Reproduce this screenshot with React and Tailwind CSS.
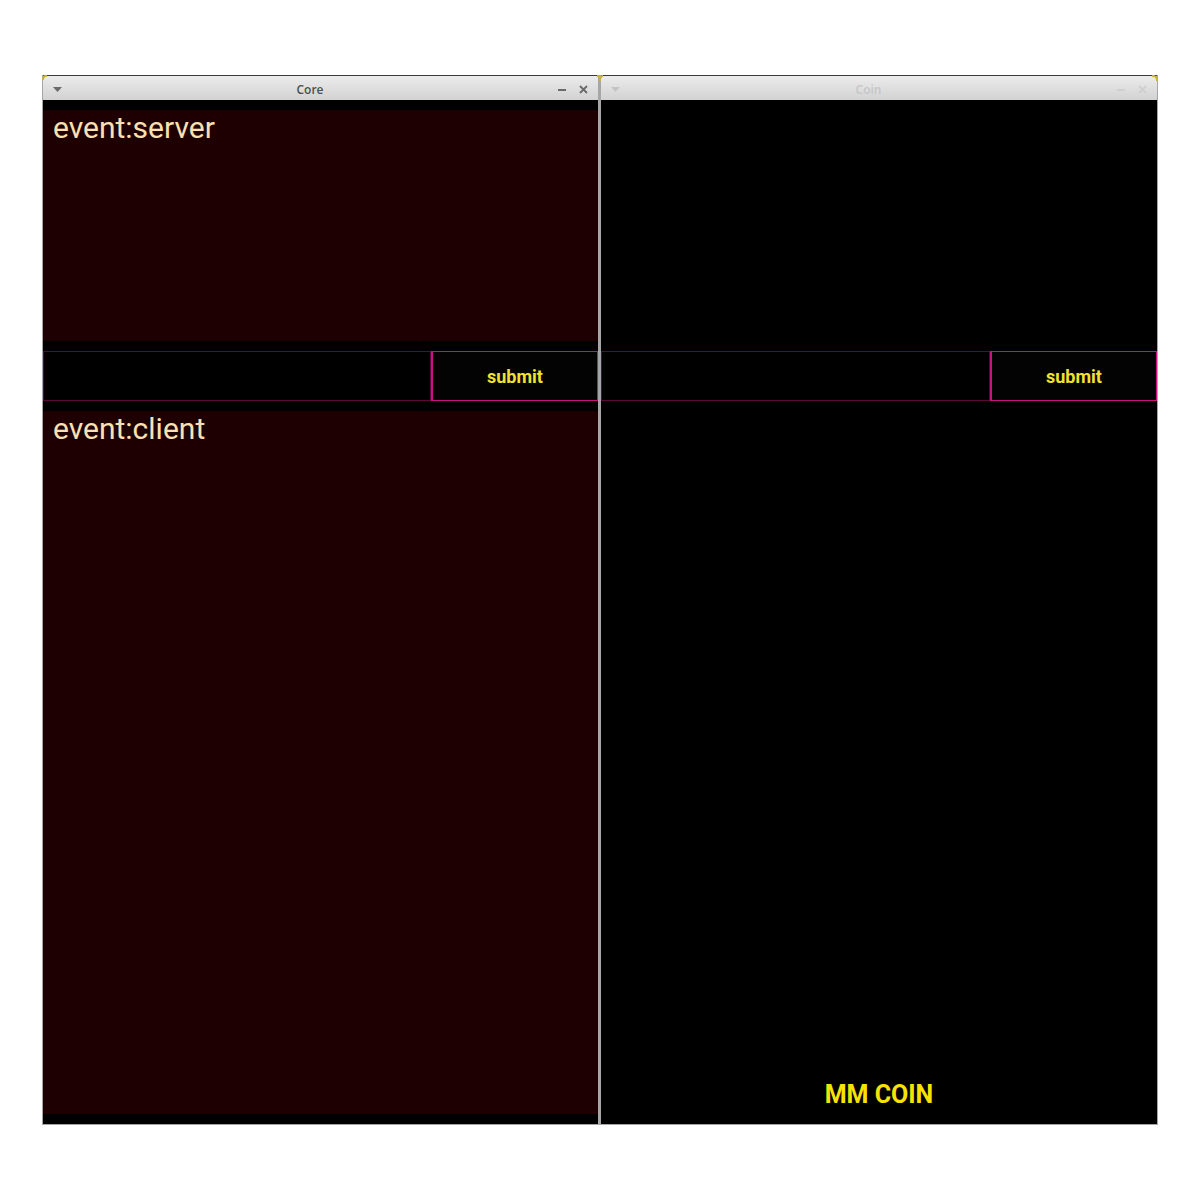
import React from "react";

const TitleBar = ({ title, active }) => (
  <div className="relative flex h-[25px] items-center border-t border-[#3a3a3a] bg-gradient-to-b from-[#ececec] to-[#d2d2d2] pt-[3px]">
    {/* window menu arrow */}
    <svg className="ml-[10px]" width="9" height="6" viewBox="0 0 9 6">
      <path d="M0 0h9L4.5 5z" fill={active ? "#6a6a6a" : "#c4c4c4"} />
    </svg>
    <div
      className={`flex-1 text-center text-[12px] font-semibold ${
        active ? "text-[#4e4e4e]" : "text-[#c6c6c6]"
      }`}
      style={{ fontFamily: '"Open Sans", "Noto Sans", sans-serif' }}
    >
      {title}
    </div>
    <div className="mr-[10px] flex items-center gap-[13px]">
      <div className={`h-[2px] w-[8px] ${active ? "bg-[#6a6a6a]" : "bg-[#cfcfcf]"}`} />
      <svg width="9" height="9" viewBox="0 0 9 9">
        <path
          d="M1 1l7 7M8 1L1 8"
          stroke={active ? "#6a6a6a" : "#cfcfcf"}
          strokeWidth="1.8"
        />
      </svg>
    </div>
    {active ? (
      <>
        <div className="absolute left-[-1px] top-[-1px] h-[5px] w-[5px] rounded-tl-[4px] border-l-2 border-t-2 border-[#c9b43a]" />
        <div className="absolute right-[-3px] top-[-1px] h-[6px] w-[4px] rounded-tr-[4px] border-r-2 border-t-2 border-[#c9b43a]" />
      </>
    ) : (
      <>
        <div className="absolute left-[-2px] top-[-1px] h-[6px] w-[4px] rounded-tl-[4px] border-l-2 border-t-2 border-[#c9b43a]" />
        <div className="absolute right-[-1px] top-[-1px] h-[6px] w-[6px] rounded-tr-[5px] border-r-2 border-t-2 border-[#c9b43a]" />
      </>
    )}
  </div>
);

const InputRow = () => (
  <div className="flex h-[50px]">
    <input
      className="h-full flex-1 border border-[#5a0a3a] bg-black outline-none"
      type="text"
    />
    <button
      className="h-full w-[167px] border border-l-2 border-[#c8107e] bg-[#030303] pt-[1px] text-[18px] font-bold text-[#f2e22c]"
      style={{ fontFamily: "Roboto, sans-serif" }}
    >
      submit
    </button>
  </div>
);

const App = () => {
  return (
    <div className="min-h-[1200px] bg-white pt-[75px]" style={{ fontFamily: "Roboto, sans-serif" }}>
      <div className="ml-[42px] flex w-[1116px]">
        {/* Core window */}
        <div className="flex h-[1050px] w-[558px] flex-col border-b border-l border-r-2 border-[#a6a6a6]">
          <TitleBar title="Core" active />
          <div className="flex flex-1 flex-col bg-black py-[10px]">
            <div className="h-[231px] bg-[#1f0002] px-[10px]">
              <div className="text-[30px] leading-[36px] text-[#fbe1b2]">event:server</div>
            </div>
            <div className="py-[10px]">
              <InputRow />
            </div>
            <div className="flex-1 bg-[#1f0002] px-[10px]">
              <div className="text-[30px] leading-[36px] text-[#fbe1b2]">event:client</div>
            </div>
          </div>
        </div>

        {/* Coin window */}
        <div className="flex h-[1050px] w-[558px] flex-col border-b border-l border-r border-[#a6a6a6]">
          <TitleBar title="Coin" />
          <div className="flex flex-1 flex-col bg-black pt-[251px]">
            <InputRow />
            <div className="flex flex-1 items-end justify-center pb-[11px]">
              <div className="text-[25px] font-bold text-[#f8e300]">MM COIN</div>
            </div>
          </div>
        </div>
      </div>
    </div>
  );
};

export default App;
